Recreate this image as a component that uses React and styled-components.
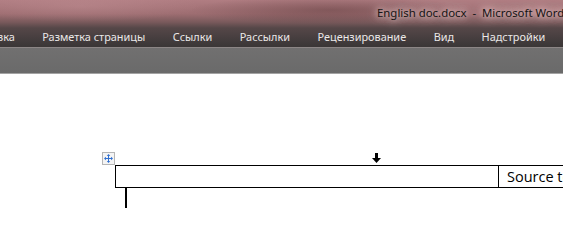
import React from 'react'
import styled, { createGlobalStyle } from 'styled-components'

const GlobalStyle = createGlobalStyle`
    html, body {
        margin: 0;
        padding: 0;
        background: #fff;
        overflow: hidden;
    }
    * {
        box-sizing: border-box;
    }
`

const tabs = ["вка", "Разметка страницы", "Ссылки", "Рассылки", "Рецензирование", "Вид", "Надстройки"]

function MoveIcon() {
    return (
        <svg width="9" height="9" viewBox="0 0 9 9">
            <g fill="#2f6fd1">
                <rect x="4" y="1" width="1" height="7" />
                <rect x="1" y="4" width="7" height="1" />
                <polygon points="4.5,0 2.8,2 6.2,2" />
                <polygon points="4.5,9 2.8,7 6.2,7" />
                <polygon points="0,4.5 2,2.8 2,6.2" />
                <polygon points="9,4.5 7,2.8 7,6.2" />
            </g>
        </svg>
    )
}

function DownArrow() {
    return (
        <svg width="9" height="11" viewBox="0 0 9 11">
            <rect x="3" y="0" width="3" height="6" fill="#000" />
            <polygon points="0,5 9,5 4.5,10" fill="#000" />
        </svg>
    )
}

function App() {
    return (
        <Window>
            <GlobalStyle />
            <Header>
                <TitleRow>
                    <Title>English doc.docx&nbsp;&nbsp;-&nbsp;&nbsp;Microsoft Word</Title>
                </TitleRow>
                <TabRow>
                    {tabs.map((t) => (
                        <Tab key={t}>{t}</Tab>
                    ))}
                </TabRow>
            </Header>
            <Ribbon />
            <Page>
                <TableWrap>
                    <MoveHandle><MoveIcon /></MoveHandle>
                    <ColMarker><DownArrow /></ColMarker>
                    <Row>
                        <Cell $width={383} />
                        <Cell $last>Source text</Cell>
                    </Row>
                </TableWrap>
                <Caret />
            </Page>
        </Window>
    )
}

export default App

const Window = styled.div`
    width: 563px;
    height: 250px;
    overflow: hidden;
    display: flex;
    flex-direction: column;
    background: #fff;
`

const Header = styled.div`
    height: 48px;
    background:
        radial-gradient(ellipse 140px 14px at 330px 10px, rgba(70, 40, 40, 0.35), transparent),
        radial-gradient(ellipse 120px 16px at 80px 6px, rgba(200, 150, 155, 0.35), transparent),
        linear-gradient(to bottom, #b07d82 0px, #9d6d71 14px, #7a5a5c 22px, #554748 28px, #463e3f 38px, #3b3737 46px);
    display: flex;
    flex-direction: column;
    border-bottom: 1px solid #8c8686;
`

const TitleRow = styled.div`
    height: 24px;
    display: flex;
    align-items: center;
    padding-left: 377px;
`

const Title = styled.div`
    font-family: "Noto Sans", sans-serif;
    font-size: 11.4px;
    color: #141414;
    white-space: nowrap;
    text-shadow: 0 0 6px rgba(255, 225, 225, 0.9), 0 0 10px rgba(255, 220, 220, 0.8), 0 0 14px rgba(255, 220, 220, 0.6);
`

const TabRow = styled.div`
    flex: 1;
    display: flex;
    align-items: center;
    gap: 27.5px;
    margin-left: -3px;
`

const Tab = styled.div`
    font-family: "Noto Sans", sans-serif;
    font-size: 10.9px;
    color: #ebe8e8;
    white-space: nowrap;
    padding-top: 1px;
`

const Ribbon = styled.div`
    height: 26px;
    background: linear-gradient(to bottom, #717070, #6a6a6a);
    border-bottom: 1px solid #a3a3a3;
`

const Page = styled.div`
    flex: 1;
    padding: 91px 0 0 115px;
`

const TableWrap = styled.div`
    position: relative;
    width: 470px;
`

const MoveHandle = styled.div`
    position: absolute;
    left: -13px;
    top: -13px;
    width: 13px;
    height: 13px;
    border: 1px solid #b5b5b5;
    background: #f4f4f4;
    display: flex;
    align-items: center;
    justify-content: center;
`

const ColMarker = styled.div`
    position: absolute;
    left: 257px;
    top: -12px;
    line-height: 0;
`

const Row = styled.div`
    display: flex;
    height: 23px;
    border: 1px solid #000;
    border-right: none;
`

const Cell = styled.div`
    width: ${(p) => (p.$width ? p.$width + 'px' : 'auto')};
    flex: ${(p) => (p.$last ? 1 : 'none')};
    border-right: ${(p) => (p.$last ? 'none' : '1px solid #000')};
    font-family: "Open Sans", sans-serif;
    font-size: 14.5px;
    color: #000;
    padding-left: 8px;
    line-height: 21px;
    white-space: nowrap;
`

const Caret = styled.div`
    width: 2px;
    height: 20px;
    margin-left: 10px;
    background: #000;
`
